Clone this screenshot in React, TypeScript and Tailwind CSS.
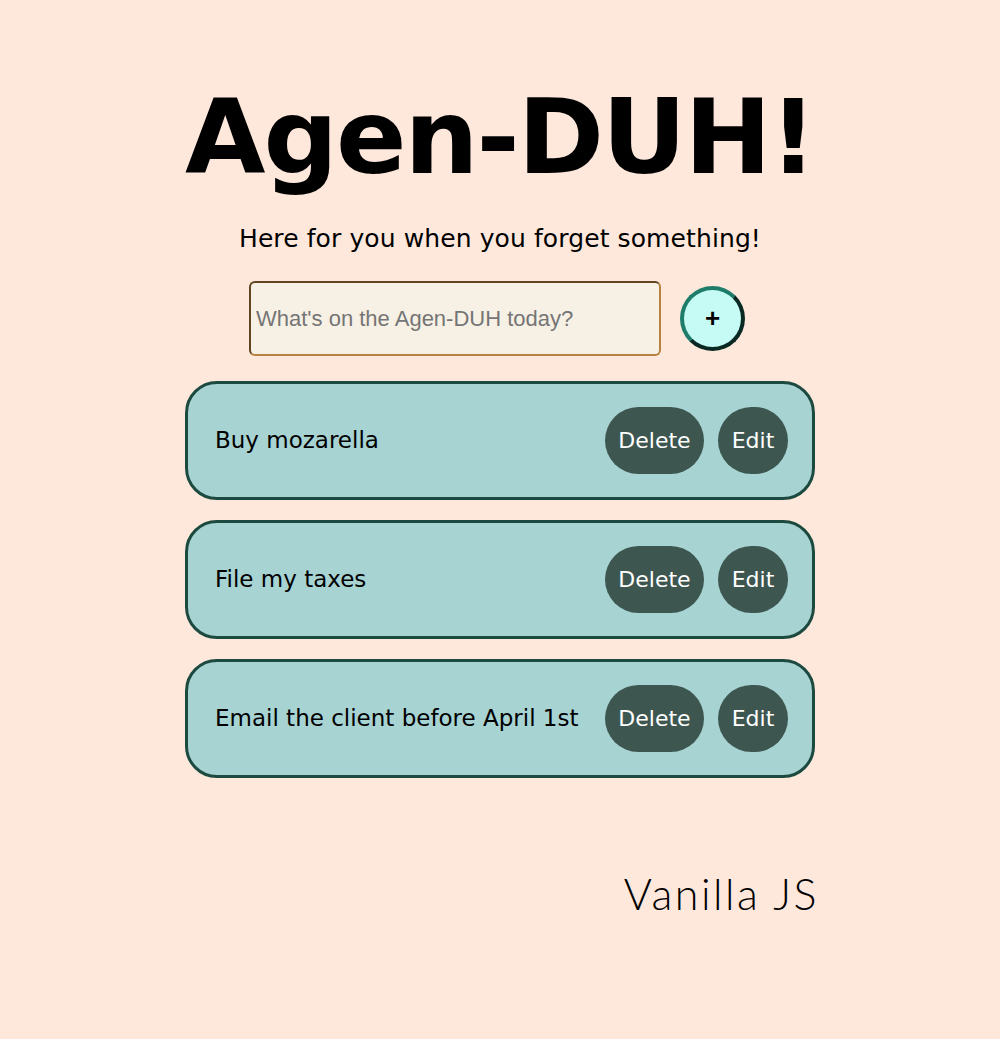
import { useState } from "react";

const tahoma = { fontFamily: '"DejaVu Sans", Verdana, sans-serif' };

const initialTodos = ["Buy mozarella", "File my taxes", "Email the client before April 1st"];

export default function App() {
  const [todos] = useState(initialTodos);
  const [text, setText] = useState("");

  return (
    <div className="min-h-[1039px] w-full bg-[#fee8dc] flex flex-col items-center pt-[85px]">
      <div className="w-[630px] flex flex-col items-center">
        <h1
          className="whitespace-nowrap text-[104px] leading-none font-bold text-black tracking-[-2px]"
          style={tahoma}
        >
          Agen-DUH!
        </h1>
        <p className="mt-[37px] text-[25px] leading-none text-black tracking-[0.1px]" style={tahoma}>
          Here for you when you forget something!
        </p>

        {/* Input row */}
        <div className="mt-[30px] flex items-center gap-[19px] pr-[6px]">
          <input
            value={text}
            onChange={(e) => setText(e.target.value)}
            placeholder="What's on the Agen-DUH today?"
            className="w-[412px] h-[75px] rounded-[6px] border-2 border-[#b5823f] [border-style:inset] bg-[#f7f1e5] px-[5px] text-[22px] text-black placeholder:text-[#757575] outline-none font-['Liberation_Sans',Arial,sans-serif]"
          />
          <button className="w-[65px] h-[65px] rounded-full border-4 border-[#1d7c6a] [border-style:outset] bg-[#c5fbf4] flex items-center justify-center text-[26px] font-bold text-black font-['Liberation_Sans',Arial,sans-serif]">
            +
          </button>
        </div>

        {/* Todo list */}
        <ul className="mt-[25px] w-full flex flex-col gap-[20px]">
          {todos.map((todo) => (
            <li
              key={todo}
              className="h-[119px] rounded-[32px] border-[3px] border-[#1d4a40] bg-[#a7d3d3] flex items-center pl-[27px] pr-[24px]"
            >
              <span className="flex-1 text-[23px] text-black" style={tahoma}>
                {todo}
              </span>
              <div className="flex items-center gap-[14px]">
                <button
                  className="w-[99px] h-[67px] rounded-full bg-[#3d5650] text-white text-[22px]"
                  style={tahoma}
                >
                  Delete
                </button>
                <button
                  className="w-[70px] h-[67px] rounded-full bg-[#3d5650] text-white text-[22px]"
                  style={tahoma}
                >
                  Edit
                </button>
              </div>
            </li>
          ))}
        </ul>

        <div className="mt-[94px] w-full flex justify-end">
          <span className="-mr-[4px] text-[43px] font-light text-black font-['Lato',sans-serif] leading-none tracking-[2.5px]">
            Vanilla JS
          </span>
        </div>
      </div>
    </div>
  );
}
